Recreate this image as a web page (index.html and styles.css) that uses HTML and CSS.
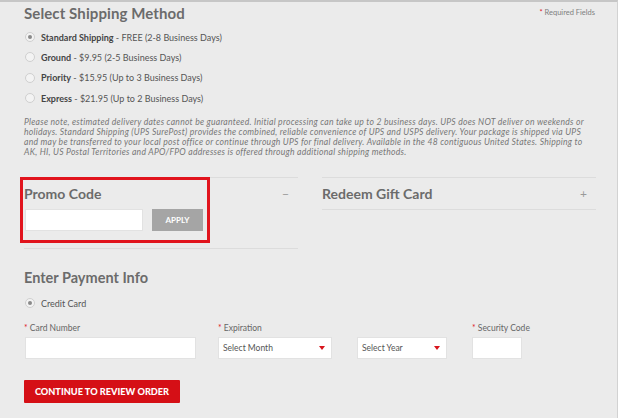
FILE: index.html
```html
<!DOCTYPE html>
<html lang="en">
<head>
<meta charset="utf-8">
<title>Checkout</title>
<link rel="stylesheet" href="styles.css">
</head>
<body>
<div class="page">
  <section class="shipping">
    <div class="head-row">
      <h2 class="title">Select Shipping Method</h2>
      <span class="req"><span class="star">*</span> Required Fields</span>
    </div>
    <ul class="options">
      <li class="opt"><span class="radio on"></span><span><b>Standard Shipping</b> - FREE (2-8 Business Days)</span></li>
      <li class="opt"><span class="radio"></span><span><b>Ground</b> - $9.95 (2-5 Business Days)</span></li>
      <li class="opt"><span class="radio"></span><span><b>Priority</b> - $15.95 (Up to 3 Business Days)</span></li>
      <li class="opt"><span class="radio"></span><span><b>Express</b> - $21.95 (Up to 2 Business Days)</span></li>
    </ul>
    <p class="note">Please note, estimated delivery dates cannot be guaranteed. Initial processing can take up to 2 business days. UPS does NOT deliver on weekends or holidays. Standard Shipping (UPS SurePost) provides the combined, reliable convenience of UPS and USPS delivery. Your package is shipped via UPS and may be transferred to your local post office or continue through UPS for final delivery. Available in the 48 contiguous United States. Shipping to AK, HI, US Postal Territories and APO/FPO addresses is offered through additional shipping methods.</p>
  </section>

  <section class="codes">
    <div class="panel promo">
      <div class="highlight"></div>
      <div class="panel-head"><h3 class="sub">Promo Code</h3><span class="toggle">&minus;</span></div>
      <div class="promo-row">
        <div class="field promo-input"></div>
        <button class="apply">APPLY</button>
      </div>
    </div>
    <div class="panel gift">
      <div class="panel-head"><h3 class="sub">Redeem Gift Card</h3><span class="toggle">+</span></div>
    </div>
  </section>

  <section class="payment">
    <h3 class="sub pay-title">Enter Payment Info</h3>
    <div class="opt cc"><span class="radio on"></span><span>Credit Card</span></div>
    <div class="fields">
      <div class="fgroup card">
        <label class="lbl"><span class="star">*</span> Card Number</label>
        <div class="field"></div>
      </div>
      <div class="fgroup exp">
        <label class="lbl"><span class="star">*</span> Expiration</label>
        <div class="selects">
          <div class="field select month"><span>Select Month</span><span class="caret"></span></div>
          <div class="field select year"><span>Select Year</span><span class="caret"></span></div>
        </div>
      </div>
      <div class="fgroup sec">
        <label class="lbl"><span class="star">*</span> Security Code</label>
        <div class="field"></div>
      </div>
    </div>
    <button class="continue">CONTINUE TO REVIEW ORDER</button>
  </section>
</div>
</body>
</html>
```
FILE: styles.css
```css
* { box-sizing: border-box; }
html, body { margin: 0; padding: 0; background: #ffffff; }
body { font-family: "Lato", "Open Sans", sans-serif; color: #555; }

.page {
  width: 618px;
  height: 418px;
  background: #ebebeb;
  border-top: 2px solid #c6c6c6;
  border-right: 1px solid #d2d2d2;
  padding: 0 21px 0 24px;
  overflow: hidden;
}

.head-row {
  display: flex;
  justify-content: space-between;
  align-items: flex-start;
  height: 25px;
}
.title {
  margin: 1px 0 0;
  font-size: 15px;
  line-height: 20px;
  font-weight: 700;
  color: #6b6b6b;
  letter-spacing: 0.1px;
}
.req {
  font-size: 7.5px;
  color: #7f7f7f;
  margin-top: 6px;
  margin-right: 1px;
}
.star { color: #e0242b; }

.options { list-style: none; margin: 0; padding: 0; }
.opt {
  display: flex;
  align-items: center;
  height: 20.3px;
  font-size: 9px;
  color: #555;
}
.opt b { font-weight: 700; color: #444; }
.radio {
  width: 10px;
  height: 10px;
  border-radius: 50%;
  border: 1px solid #cfcfcf;
  background: #f3f3f3;
  margin: 0 6px 0 1px;
  display: flex;
  align-items: center;
  justify-content: center;
}
.radio.on::after {
  content: "";
  width: 4px;
  height: 4px;
  border-radius: 50%;
  background: #8a8a8a;
}

.note {
  margin: 9px 0 0;
  font-size: 8.6px;
  letter-spacing: 0.25px;
  line-height: 10px;
  font-style: italic;
  color: #777;
  width: 572px;
}

.codes {
  display: flex;
  gap: 24px;
  margin-top: 20px;
  width: 572px;
}
.panel {
  flex: 1;
  border-top: 1px solid #dcdcdc;
  position: relative;
}
.promo { border-bottom: 1px solid #dcdcdc; height: 72px; }
.gift { border-bottom: 1px solid #dcdcdc; height: 33px; }
.highlight {
  position: absolute;
  left: -4px;
  top: -1px;
  width: 190px;
  height: 66px;
  border: 3px solid #e1141d;
}
.panel-head {
  display: flex;
  justify-content: space-between;
  align-items: center;
  height: 31px;
  padding-right: 9px;
}
.sub {
  margin: 0;
  font-size: 14px;
  font-weight: 700;
  color: #6b6b6b;
}
.toggle { color: #999; font-size: 12px; }

.promo-row {
  display: flex;
  gap: 9px;
  padding-left: 1px;
}
.field {
  background: #ffffff;
  border: 1px solid #e2e2e2;
  height: 22px;
}
.promo-input { width: 118px; }
.apply {
  width: 51px;
  height: 22px;
  border: none;
  background: #a5a5a5;
  color: #fff;
  font-family: inherit;
  font-weight: 700;
  font-size: 8px;
  padding: 0;
}

.payment { padding-top: 20px; }
.pay-title { line-height: 18px; font-size: 14.5px; }
.cc { margin-top: 6px; }
.fields {
  display: flex;
  margin-top: 9px;
}
.fgroup { display: flex; flex-direction: column; }
.lbl {
  font-size: 8.5px;
  color: #666;
  height: 15px;
  line-height: 12px;
}
.card { width: 194px; }
.card .field { width: 171px; margin-left: 1px; }
.exp .selects { display: flex; gap: 25px; }
.select {
  display: flex;
  align-items: center;
  justify-content: space-between;
  padding: 0 6px 0 4px;
  font-size: 8.5px;
  color: #555;
}
.month { width: 114px; }
.year { width: 90px; }
.sec { margin-left: 25px; }
.sec .field { width: 50px; }
.caret {
  width: 0;
  height: 0;
  border-left: 3.5px solid transparent;
  border-right: 3.5px solid transparent;
  border-top: 4px solid #d8141c;
}

.continue {
  margin-top: 21px;
  width: 156px;
  height: 23px;
  border: none;
  border-radius: 1px;
  background: #d50f16;
  color: #fff;
  font-family: inherit;
  font-weight: 900;
  font-size: 9.2px;
  padding: 0;
}
```
